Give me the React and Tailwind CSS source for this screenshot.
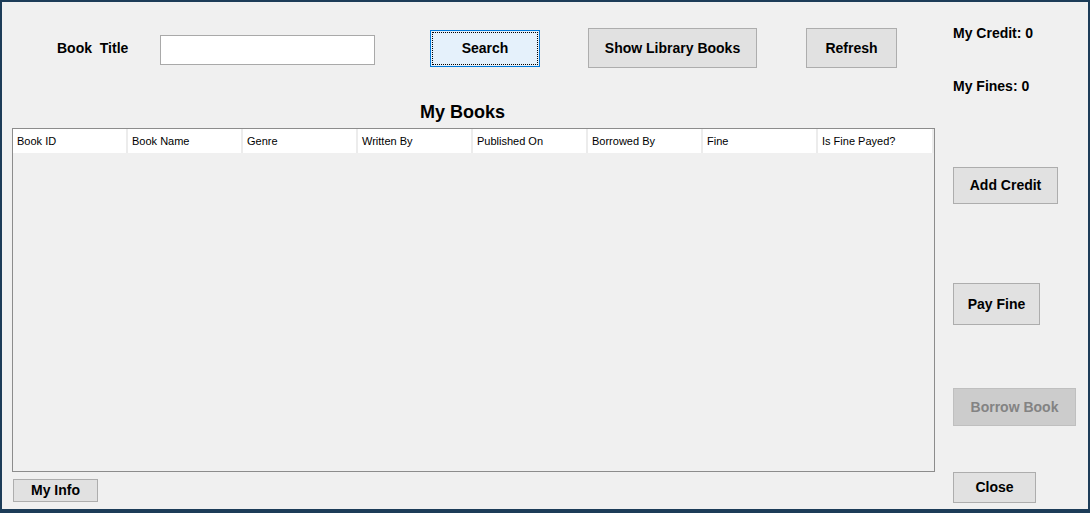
const columns = [
  "Book ID",
  "Book Name",
  "Genre",
  "Written By",
  "Published On",
  "Borrowed By",
  "Fine",
  "Is Fine Payed?",
];

const Button = ({ className = "", children, disabled }) => (
  <button
    className={
      "flex items-center justify-center border text-[14px] font-bold " +
      (disabled
        ? "border-[#bfbfbf] bg-[#cccccc] text-[#838383] "
        : "border-[#adadad] bg-[#e1e1e1] text-black ") +
      className
    }
  >
    {children}
  </button>
);

const App = () => {
  return (
    <div
      className="w-[1090px] h-[513px] bg-[#1c3c58] pt-[2px] pl-[2px] pr-[2px] pb-[4px]"
      style={{ fontFamily: '"Liberation Sans", Arial, sans-serif' }}
    >
      <div className="flex h-full bg-[#f0f0f0]">
        {/* Left side */}
        <div className="flex flex-col w-[940px]">
          {/* Search row */}
          <div className="flex items-center mt-[26px] h-[40px]">
            <span className="ml-[55px] w-[103px] whitespace-pre text-[14px] font-bold">
              Book  Title
            </span>
            <input
              className="mt-[4px] w-[215px] h-[30px] border border-[#a9a9a9] bg-white outline-none"
              type="text"
            />
            <div className="ml-[55px] w-[110px] h-[37px] border border-[#0078d7] bg-[#e5f1fb] p-[1px]">
              <div className="flex h-full items-center justify-center border border-dotted border-black text-[14px] font-bold">
                Search
              </div>
            </div>
            <Button className="ml-[48px] w-[169px] h-[40px]">Show Library Books</Button>
            <Button className="ml-[49px] w-[91px] h-[40px]">Refresh</Button>
          </div>

          {/* Title */}
          <div className="ml-[418px] mt-[31px] h-[26px] text-[18px] font-bold leading-[26px]">
            My Books
          </div>

          {/* Table */}
          <div className="ml-[10px] mt-[3px] w-[923px] h-[344px] border border-[#8c8c8c] bg-[#f0f0f0]">
            <div className="flex h-[24px] bg-white">
              {columns.map((c, i) => (
                <div
                  key={c}
                  className={
                    "flex items-center pl-[4px] text-[11px] border-r-2 border-[#ececec] " +
                    (i === 7 ? "w-[116px]" : "w-[115px]")
                  }
                >
                  {c}
                </div>
              ))}
            </div>
          </div>

          <Button className="ml-[11px] mt-[7px] w-[85px] h-[23px]">My Info</Button>
        </div>

        {/* Right side */}
        <div className="flex flex-col ml-[11px]">
          <div className="mt-[22px] h-[18px] text-[14px] font-bold leading-[18px]">My Credit: 0</div>
          <div className="mt-[35px] h-[18px] text-[14px] font-bold leading-[18px]">My Fines: 0</div>
          <Button className="mt-[72px] w-[105px] h-[37px]">Add Credit</Button>
          <Button className="mt-[79px] w-[87px] h-[42px]">Pay Fine</Button>
          <Button disabled className="mt-[63px] w-[123px] h-[38px]">Borrow Book</Button>
          <Button className="mt-[46px] w-[83px] h-[31px]">Close</Button>
        </div>
      </div>
    </div>
  );
};

export default App;
